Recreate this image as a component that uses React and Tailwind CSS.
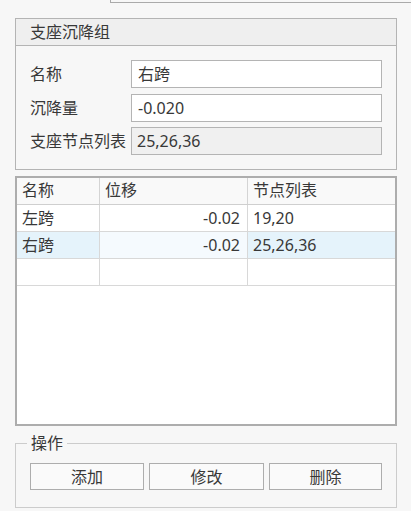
export default function App() {
  const rows = [
    { name: "左跨", shift: "-0.02", nodes: "19,20", selected: false },
    { name: "右跨", shift: "-0.02", nodes: "25,26,36", selected: true },
    { name: "", shift: "", nodes: "", selected: false },
  ];
  const font = { fontFamily: '"Noto Sans", "Noto Sans CJK SC", sans-serif' };
  return (
    <div
      className="w-[411px] h-[511px] bg-[#f7f7f7] overflow-hidden text-[15px] text-[#383838]"
      style={font}
    >
      {/* tab header edge */}
      <div className="ml-[110px] h-[3px] border-l border-b border-[#aaaaaa]"></div>

      {/* 支座沉降组 */}
      <div className="mt-[15px] ml-[15px] w-[382px] h-[152px] border border-[#b4b4b4] bg-[#f7f7f7]">
        <div className="h-[27px] bg-[#efefef] border-b border-[#b4b4b4] pl-[14px] text-[16px] leading-[26px]">
          支座沉降组
        </div>
        <div className="pl-[14px] pt-[14px] flex flex-col gap-[6px]">
          <div className="flex items-center">
            <div className="w-[101px] text-[16px]">名称</div>
            <div className="w-[251px] h-[28px] border border-[#b4b4b4] bg-white pl-[6px] text-[16px] leading-[26px]">
              右跨
            </div>
          </div>
          <div className="flex items-center">
            <div className="w-[101px] text-[16px]">沉降量</div>
            <div className="w-[251px] h-[28px] border border-[#b4b4b4] bg-white pl-[6px] text-[16px] leading-[26px]">
              -0.020
            </div>
          </div>
          <div className="flex items-center -mt-[1px]">
            <div className="w-[101px] text-[16px] whitespace-nowrap">支座节点列表</div>
            <div className="w-[251px] h-[28px] border border-[#b4b4b4] bg-[#f0f0f0] pl-[5px] text-[16px] leading-[26px]">
              25,26,36
            </div>
          </div>
        </div>
      </div>

      {/* table */}
      <div className="mt-[6px] ml-[15px] w-[382px] h-[250px] border-2 border-[#adadad] bg-white">
        <div className="flex h-[27px] bg-[#f9f9f9] border-b border-[#cfcfcf] text-[16px] leading-[25px]">
          <div className="w-[83px] pl-[5px] border-r border-[#d4d4d4]">名称</div>
          <div className="w-[148px] pl-[5px] border-r border-[#d4d4d4]">位移</div>
          <div className="flex-1 pl-[5px]">节点列表</div>
        </div>
        {rows.map((r, i) => (
          <div
            key={i}
            className="flex h-[27px] border-b border-[#d8d8d8] text-[16px] leading-[26px]"
          >
            <div
              className={
                "w-[83px] pl-[5px] border-r border-[#d8d8d8] " +
                (r.selected ? "bg-[#e5f3fb]" : "bg-white")
              }
            >
              {r.name}
            </div>
            <div
              className={
                "w-[148px] pr-[7px] text-right border-r border-[#d8d8d8] " +
                (r.selected ? "bg-[#f5fafe]" : "bg-white")
              }
            >
              {r.shift}
            </div>
            <div
              className={
                "flex-1 pl-[5px] " + (r.selected ? "bg-[#e5f3fb]" : "bg-white")
              }
            >
              {r.nodes}
            </div>
          </div>
        ))}
      </div>

      {/* 操作 */}
      <fieldset className="mt-[7px] ml-[15px] w-[382px] border border-[#cccccc] pl-[14px] pr-[14px] pb-[17px] pt-[10px]">
        <legend className="-ml-[3px] px-[4px] text-[16px] leading-[20px]">操作</legend>
        <div className="flex gap-[5px]">
          {["添加", "修改", "删除"].map((t, i) => (
            <button
              key={t}
              className={
                "h-[27px] border border-[#adadad] bg-[#fafafa] text-[16px] leading-[24px] text-[#383838] " +
                (i === 0 ? "w-[114px]" : i === 1 ? "w-[115px]" : "w-[113px]")
              }
              style={font}
            >
              {t}
            </button>
          ))}
        </div>
      </fieldset>
    </div>
  );
}
